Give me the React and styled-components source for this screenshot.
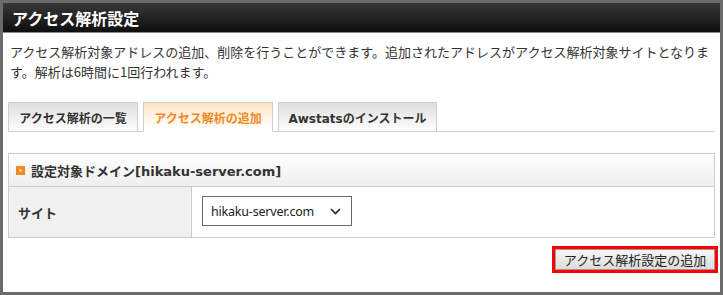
import React from "react";
import styled, { createGlobalStyle } from "styled-components";

const Global = createGlobalStyle`
  html, body { margin: 0; padding: 0; background: #fff; }
  body { font-family: "Noto Sans CJK JP", "Noto Sans", sans-serif; color: #333; }
  * { box-sizing: border-box; }
`;

const Frame = styled.div`
  width: 723px;
  height: 295px;
  border: 3px solid #6b6b6b;
  background: #fff;
  display: flex;
  flex-direction: column;
`;

const Header = styled.div`
  height: 30px;
  flex: none;
  background: linear-gradient(#383838, #0e0e0e);
  border-bottom: 1px solid #8a8a8a;
  display: flex;
  align-items: center;
  padding: 0 0 0 9px;
`;

const Title = styled.h1`
  margin: 0;
  font-size: 16px;
  font-weight: bold;
  color: #fff;
  line-height: 1;
`;

const Body = styled.div`
  padding: 9px 5px 0 5px;
  display: flex;
  flex-direction: column;
`;

const Desc = styled.p`
  margin: 0;
  padding-left: 2px;
  font-size: 13px;
  line-height: 20px;
  color: #333;
`;

const TabBar = styled.div`
  margin-top: 20px;
  display: flex;
  gap: 5px;
  border-bottom: 1px solid #cfcfcf;
  height: 30px;
`;

const Tab = styled.div`
  height: 30px;
  padding: 0;
  display: flex;
  align-items: center;
  justify-content: center;
  white-space: nowrap;
  font-family: "DejaVu Sans", "Noto Sans CJK JP", sans-serif;
  font-size: 12px;
  font-weight: bold;
  border: 1px solid #cfcfcf;
  border-bottom: ${(p) => (p.$active ? "1px solid #fff" : "1px solid #cfcfcf")};
  color: ${(p) => (p.$active ? "#f28a1a" : "#333")};
  background: ${(p) =>
    p.$active
      ? "linear-gradient(#fde3c6, #fff 90%)"
      : "linear-gradient(#dedede, #fbfbfb 90%)"};
  width: ${(p) => p.$w}px;
`;

const Section = styled.div`
  margin-top: 21px;
  border: 1px solid #cccccc;
`;

const SectionHead = styled.div`
  height: 33px;
  border-bottom: 1px solid #cccccc;
  background: linear-gradient(#ffffff, #eeeeee);
  display: flex;
  align-items: center;
  gap: 6px;
  padding-left: 7px;
  font-family: "DejaVu Sans", "Noto Sans CJK JP", sans-serif;
  font-size: 13px;
  font-weight: bold;
  color: #333;
`;

const Row = styled.div`
  display: flex;
  height: 50px;
`;

const Label = styled.div`
  width: 183px;
  background: #f0f0f0;
  border-right: 1px solid #cccccc;
  display: flex;
  align-items: center;
  padding-left: 9px;
  font-size: 13px;
  font-weight: bold;
  color: #333;
`;

const Value = styled.div`
  flex: 1;
  padding: 9px 0 0 10px;
`;

const Select = styled.div`
  width: 150px;
  height: 30px;
  border: 1px solid #6a6a6a;
  background: #fff;
  display: flex;
  align-items: center;
  justify-content: space-between;
  padding: 0 10px 0 8px;
  font-family: "Noto Sans", sans-serif;
  font-size: 12.5px;
  color: #222;
  letter-spacing: -0.2px;
`;

const Actions = styled.div`
  display: flex;
  justify-content: flex-end;
  margin-top: 11px;
`;

const Button = styled.button`
  height: 21px;
  width: 160px;
  padding: 0;
  border: 1px solid #9a9a9a;
  background: linear-gradient(#f6f6f6, #dcdcdc);
  outline: 3px solid #ff0000;
  font-family: "Noto Sans CJK JP", sans-serif;
  font-size: 13px;
  color: #222;
  line-height: 1;
`;

const Marker = () => (
  <svg width="9" height="9" viewBox="0 0 9 9">
    <rect width="9" height="9" fill="#f08c1e" />
    <path d="M3.5 2.5 L6 4.5 L3.5 6.5 Z" fill="#fff3d6" />
  </svg>
);

const Chevron = () => (
  <svg width="11" height="7" viewBox="0 0 11 7">
    <path d="M1 1 L5.5 5.5 L10 1" fill="none" stroke="#222" strokeWidth="1.6" />
  </svg>
);

export default function App() {
  return (
    <>
      <Global />
      <Frame>
        <Header>
          <Title>アクセス解析設定</Title>
        </Header>
        <Body>
          <Desc>
            アクセス解析対象アドレスの追加、削除を行うことができます。追加されたアドレスがアクセス解析対象サイトとなりま
            <br />
            す。解析は6時間に1回行われます。
          </Desc>
          <TabBar>
            <Tab $w={130}>アクセス解析の一覧</Tab>
            <Tab $w={130} $active>アクセス解析の追加</Tab>
            <Tab $w={159}>Awstatsのインストール</Tab>
          </TabBar>
          <Section>
            <SectionHead>
              <Marker />
              設定対象ドメイン[hikaku-server.com]
            </SectionHead>
            <Row>
              <Label>サイト</Label>
              <Value>
                <Select>
                  <span>hikaku-server.com</span>
                  <Chevron />
                </Select>
              </Value>
            </Row>
          </Section>
          <Actions>
            <Button>アクセス解析設定の追加</Button>
          </Actions>
        </Body>
      </Frame>
    </>
  );
}
